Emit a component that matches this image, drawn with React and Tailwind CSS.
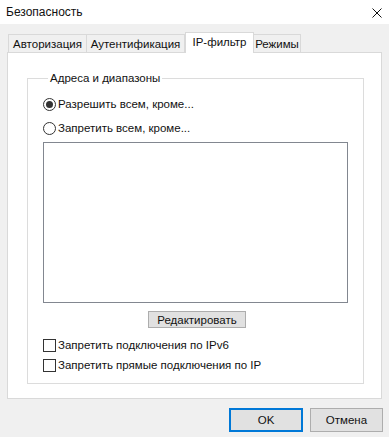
import React from 'react'

// Windows-style "Безопасность" dialog, IP-фильтр tab open
const font = { fontFamily: '"Liberation Sans", "Noto Sans", sans-serif' }

function Tab({ label, width, active, first }) {
  if (active) {
    return (
      <div className={`h-[21px] -mb-px bg-white border border-b-0 border-[#d9d9d9] flex items-center justify-center ${width}`}>
        <span className="pb-[2px]">{label}</span>
      </div>
    )
  }
  return (
    <div className={`h-[19px] -mb-px bg-[#f0f0f0] border border-[#d9d9d9] flex items-center justify-center ${width} ${first ? '' : 'border-l-0'}`}>
      {label}
    </div>
  )
}

function Radio({ checked, label }) {
  return (
    <div className="flex items-center h-[16px] gap-[2px]">
      <div className="w-[13px] h-[13px] rounded-full border border-[#333333] bg-white flex items-center justify-center">
        {checked && <div className="w-[7px] h-[7px] rounded-full bg-[#333333]" />}
      </div>
      <span>{label}</span>
    </div>
  )
}

function Check({ label }) {
  return (
    <div className="flex items-center h-[16px] gap-[2px]">
      <div className="w-[13px] h-[13px] border border-[#333333] bg-white" />
      <span>{label}</span>
    </div>
  )
}

export default function App() {
  return (
    <div className="w-[389px] h-[437px] bg-[#f0f0f0] flex flex-col text-[11.5px] text-[#111] leading-[16px]" style={font}>
      {/* title bar */}
      <div className="h-[24px] bg-white flex items-center justify-between pl-[6px] pr-[7px]">
        <span className="text-[12px]">Безопасность</span>
        <svg width="10" height="10" viewBox="0 0 10 10" className="mt-[1px]">
          <path d="M0.5 0.5 L9.5 9.5 M9.5 0.5 L0.5 9.5" stroke="#111" strokeWidth="1" fill="none" />
        </svg>
      </div>

      {/* tabs */}
      <div className="flex items-end pl-[8px] mt-[8px] relative z-10">
        <Tab label="Авторизация" width="w-[79px]" first />
        <Tab label="Аутентификация" width="w-[98px]" />
        <Tab label="IP-фильтр" width="w-[69px]" active />
        <Tab label="Режимы" width="w-[47px]" />
      </div>

      {/* panel */}
      <div className="ml-[7px] w-[375px] h-[347px] bg-white border border-[#d9d9d9] pl-[19px] pt-[17px]">
        <fieldset className="w-[337px] h-[314px] border border-[#dcdcdc] pl-[15px]">
          <legend className="ml-[5px] px-[2px] leading-[16px]">Адреса и диапазоны</legend>
          <div className="mt-[10px] flex flex-col gap-[8px]">
            <Radio checked label="Разрешить всем, кроме..." />
            <Radio label="Запретить всем, кроме..." />
          </div>
          <div className="mt-[6px] w-[305px] h-[161px] border border-[#828790] bg-white" />
          <div className="flex justify-center w-[305px] mt-[8px]">
            <button className="w-[98px] h-[17px] ml-[3px] bg-[#e1e1e1] border border-[#adadad] flex items-center justify-center">
              Редактировать
            </button>
          </div>
          <div className="mt-[9px] flex flex-col gap-[4px]">
            <Check label="Запретить подключения по IPv6" />
            <Check label="Запретить прямые подключения по IP" />
          </div>
        </fieldset>
      </div>

      {/* footer */}
      <div className="flex justify-end gap-[7px] pr-[6px] mt-[9px]">
        <button className="w-[74px] h-[24px] bg-[#e1e1e1] border-2 border-[#0078d7] flex items-center justify-center">OK</button>
        <button className="w-[73px] h-[24px] bg-[#e1e1e1] border border-[#adadad] flex items-center justify-center">Отмена</button>
      </div>
    </div>
  )
}
